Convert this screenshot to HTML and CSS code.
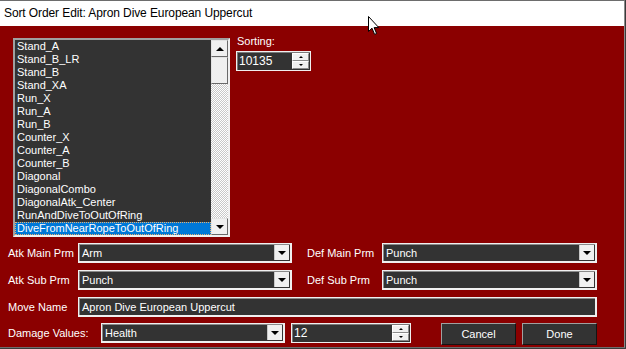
FILE: index.html
```html
<!DOCTYPE html>
<html lang="en">
<head>
    <meta charset="UTF-8">
    <title>Sort Order Edit</title>
    <link rel="stylesheet" href="styles.css">
</head>
<body>
    <div class="window">
        <div class="titlebar">Sort Order Edit: Apron Dive European Uppercut</div>

        <div class="client">
            <div class="top">
                <!-- move list -->
                <div class="listbox">
                    <ul class="items">
                        <li>Stand_A</li>
                        <li>Stand_B_LR</li>
                        <li>Stand_B</li>
                        <li>Stand_XA</li>
                        <li>Run_X</li>
                        <li>Run_A</li>
                        <li>Run_B</li>
                        <li>Counter_X</li>
                        <li>Counter_A</li>
                        <li>Counter_B</li>
                        <li>Diagonal</li>
                        <li>DiagonalCombo</li>
                        <li>DiagonalAtk_Center</li>
                        <li>RunAndDiveToOutOfRing</li>
                        <li class="selected">DiveFromNearRopeToOutOfRing</li>
                    </ul>
                    <div class="vscroll">
                        <div class="sbtn"><span class="tri-up"></span></div>
                        <div class="thumb"></div>
                        <div class="track"></div>
                        <div class="sbtn"><span class="tri-down"></span></div>
                    </div>
                </div>

                <div class="sorting">
                    <div class="sort-label">Sorting:</div>
                    <div class="spin sort-spin">
                        <span class="value">10135</span>
                        <div class="spin-btns">
                            <span class="spin-btn"><span class="tri-up small"></span></span>
                            <span class="spin-btn"><span class="tri-down small"></span></span>
                        </div>
                    </div>
                </div>
            </div>

            <div class="row">
                <div class="label w70">Atk Main Prm</div>
                <div class="combo w214"><span class="value">Arm</span><span class="drop"><span class="tri-down"></span></span></div>
                <div class="label def-label">Def Main Prm</div>
                <div class="combo w215"><span class="value">Punch</span><span class="drop"><span class="tri-down"></span></span></div>
            </div>

            <div class="row">
                <div class="label w70">Atk Sub Prm</div>
                <div class="combo w214"><span class="value">Punch</span><span class="drop"><span class="tri-down"></span></span></div>
                <div class="label def-label">Def Sub Prm</div>
                <div class="combo w215"><span class="value">Punch</span><span class="drop"><span class="tri-down"></span></span></div>
            </div>

            <div class="row">
                <div class="label w70">Move Name</div>
                <div class="textbox"><span class="value">Apron Dive European Uppercut</span></div>
            </div>

            <div class="row last">
                <div class="label w93">Damage Values:</div>
                <div class="combo w184"><span class="value">Health</span><span class="drop"><span class="tri-down"></span></span></div>
                <div class="spin dmg-spin">
                    <span class="value">12</span>
                    <div class="spin-btns">
                        <span class="spin-btn"><span class="tri-up small"></span></span>
                        <span class="spin-btn"><span class="tri-down small"></span></span>
                    </div>
                </div>
                <button class="btn cancel">Cancel</button>
                <button class="btn done">Done</button>
            </div>
        </div>

        <!-- mouse pointer over the title bar -->
        <svg class="cursor" width="13" height="20" viewBox="0 0 13 20">
            <path d="M0.5 0.5 L0.5 15.5 L4 12.2 L6.6 18.4 L8.6 17.5 L6.1 11.6 L10.8 11.6 Z" fill="#fff" stroke="#000" stroke-width="1"/>
        </svg>
    </div>
</body>
</html>
```

FILE: styles.css
```css
body {
    margin: 0;
    background-color: #3a3a3a;
    font-family: "Liberation Sans", Arial, sans-serif;
    font-size: 11px;
    color: #fff;
}

.window {
    position: relative;
    width: 624px;
    height: 346px;
    border-top: 1px solid #6d6d6d;
    border-right: 1px solid #8a8a8a;
    border-bottom: 1px solid #6d6d6d;
    overflow: hidden;
}

.titlebar {
    height: 25px;
    line-height: 25px;
    padding-left: 4px;
    background-color: #fff;
    color: #000;
    font-size: 12px;
    letter-spacing: -0.1px;
}

.client {
    height: 321px;
    background-color: #8b0000;
}

.top {
    display: flex;
    padding: 9px 0 0 13px;
}

/* list box */
.listbox {
    display: flex;
    width: 213px;
    height: 195px;
    margin-top: 3px;
    border: 2px solid;
    border-color: #a0a0a0 #f0f0f0 #f0f0f0 #a0a0a0;
    background-color: #333;
}

.items {
    list-style: none;
    margin: 0;
    padding: 0;
    width: 196px;
}

.items li {
    height: 13px;
    line-height: 13px;
    padding-left: 2px;
    white-space: nowrap;
}

.items li.selected {
    background-color: #0078d7;
    outline: 1px dotted #e8b070;
    outline-offset: -1px;
}

.vscroll {
    display: flex;
    flex-direction: column;
    width: 17px;
}

.sbtn {
    display: flex;
    align-items: center;
    justify-content: center;
    box-sizing: border-box;
    height: 17px;
    background-color: #f0f0f0;
    border: 1px solid;
    border-color: #e3e3e3 #696969 #696969 #e3e3e3;
}

.thumb {
    box-sizing: border-box;
    height: 27px;
    background-color: #f0f0f0;
    border: 1px solid;
    border-color: #e3e3e3 #696969 #696969 #e3e3e3;
}

.track {
    flex: 1;
    background: repeating-conic-gradient(#fff 0 25%, #c8c8c8 0 50%) 0 0 / 2px 2px;
}

.tri-up,
.tri-down {
    width: 0;
    height: 0;
    border-left: 4px solid transparent;
    border-right: 4px solid transparent;
}

.tri-up {
    border-bottom: 4px solid #000;
}

.tri-down {
    border-top: 4px solid #000;
}

.tri-up.small,
.tri-down.small {
    border-left-width: 2px;
    border-right-width: 2px;
    border-top-width: 2px;
    border-bottom-width: 2px;
}

/* sorting spinner */
.sorting {
    margin-left: 6px;
}

.sort-label {
    height: 13px;
    line-height: 13px;
    padding-left: 1px;
}

.spin {
    display: flex;
    align-items: center;
    box-sizing: border-box;
    height: 20px;
    border: 1px solid #f0f0f0;
    box-shadow: inset 1px 1px 0 #7a7a7a;
    background-color: #333;
}

.sort-spin {
    width: 75px;
    margin-top: 3px;
}

.spin .value {
    flex: 1;
    padding-left: 2px;
    font-size: 12px;
}

.spin-btns {
    display: flex;
    flex-direction: column;
    width: 17px;
    height: 16px;
    margin-right: 1px;
}

.spin-btn {
    display: flex;
    align-items: center;
    justify-content: center;
    box-sizing: border-box;
    height: 8px;
    background-color: #f0f0f0;
    border: 1px solid;
    border-color: #fff #8a8a8a #8a8a8a #fff;
}

/* form rows */
.row {
    display: flex;
    align-items: center;
    height: 20px;
    margin-top: 7px;
    padding-left: 8px;
}

.row:nth-child(2) {
    margin-top: 6px;
}

.row.last {
    align-items: flex-start;
    margin-top: 6px;
}

.label {
    line-height: 20px;
    white-space: nowrap;
}

.w70 { width: 70px; }
.w93 { width: 93px; }

.def-label {
    width: 75px;
    margin-left: 15px;
}

.combo,
.textbox {
    display: flex;
    align-items: center;
    box-sizing: border-box;
    height: 20px;
    border: 1px solid #f0f0f0;
    border-right-width: 2px;
    border-bottom-width: 2px;
    box-shadow: inset 1px 1px 0 #8a8a8a;
    background-color: #333;
}

.w214 { width: 214px; }
.w215 { width: 215px; }
.w184 { width: 184px; }

.textbox {
    width: 519px;
}

.combo .value,
.textbox .value {
    flex: 1;
    padding-left: 3px;
    white-space: nowrap;
}

.drop {
    display: flex;
    align-items: center;
    justify-content: center;
    width: 14px;
    height: 15px;
    margin-right: 1px;
    background-color: #f0f0f0;
    border-left: 1px solid #c8c8c8;
}

.dmg-spin {
    width: 120px;
    margin-left: 6px;
}

.btn {
    box-sizing: border-box;
    width: 75px;
    height: 22px;
    padding: 0;
    background-color: #333;
    color: #fff;
    font-family: "Liberation Sans", Arial, sans-serif;
    font-size: 11px;
    border: 1px solid;
    border-color: #a0a0a0 #141414 #141414 #a0a0a0;
}

.cancel {
    margin-left: 30px;
}

.done {
    margin-left: 6px;
}

.cursor {
    position: absolute;
    left: 368px;
    top: 15px;
}
```
